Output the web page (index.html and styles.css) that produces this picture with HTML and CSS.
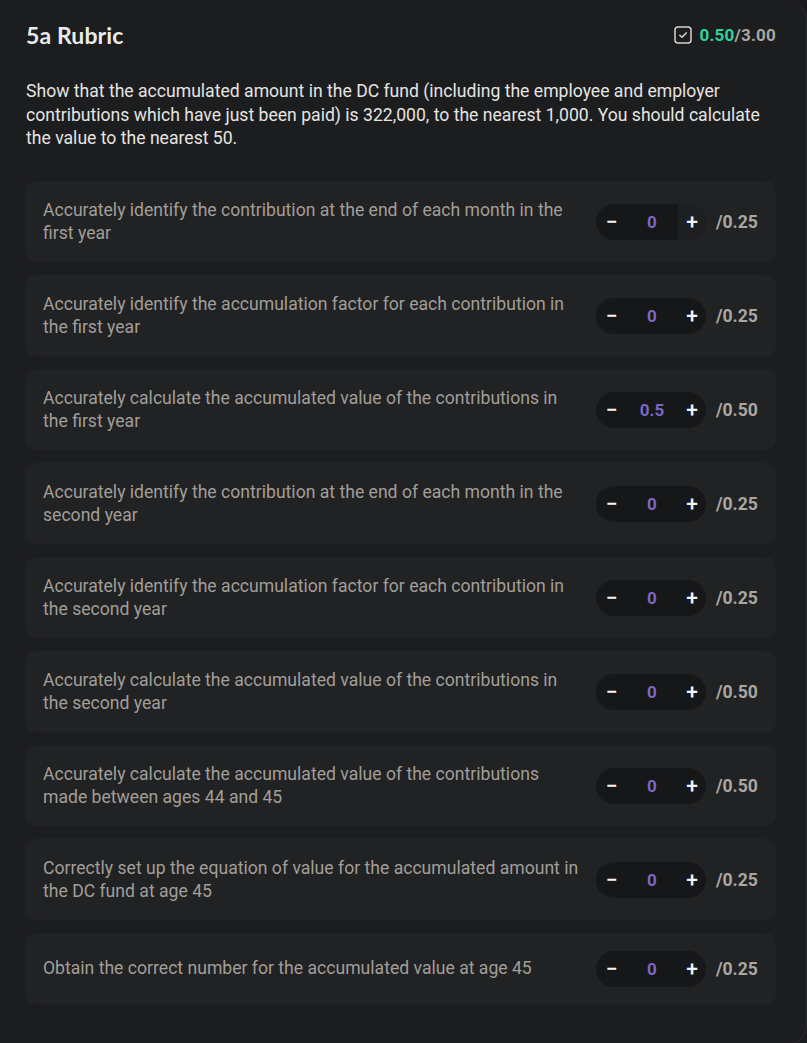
FILE: index.html
```html
<!DOCTYPE html>
<html lang="en">
<head>
<meta charset="utf-8">
<title>5a Rubric</title>
<link rel="stylesheet" href="styles.css">
</head>
<body>
<div class="card">
  <header class="head">
    <h1 class="title">5a Rubric</h1>
    <div class="total">
      <svg class="check" width="18" height="18" viewBox="0 0 18 18" aria-hidden="true">
        <rect x="1" y="1" width="16" height="16" rx="3" fill="none" stroke="#d6d3d1" stroke-width="1.5"/>
        <path d="M5.8 9.2 L8 11.2 L12.2 6.9" fill="none" stroke="#d6d3d1" stroke-width="1.5" stroke-linecap="round" stroke-linejoin="round"/>
      </svg>
      <span class="got">0.50</span><span class="max">/3.00</span>
    </div>
  </header>
  <p class="desc">Show that the accumulated amount in the DC fund (including the employee and employer contributions which have just been paid) is 322,000, to the nearest 1,000. You should calculate the value to the nearest 50.</p>
  <div class="items">
    <div class="item">
      <div class="text">Accurately identify the contribution at the end of each month in the first year</div>
      <div class="ctrl"><div class="pill"><button class="btn">−</button><span class="val">0</span><button class="btn hover">+</button></div><span class="out">/0.25</span></div>
    </div>
    <div class="item">
      <div class="text">Accurately identify the accumulation factor for each contribution in the first year</div>
      <div class="ctrl"><div class="pill"><button class="btn">−</button><span class="val">0</span><button class="btn">+</button></div><span class="out">/0.25</span></div>
    </div>
    <div class="item">
      <div class="text">Accurately calculate the accumulated value of the contributions in the first year</div>
      <div class="ctrl"><div class="pill"><button class="btn">−</button><span class="val">0.5</span><button class="btn">+</button></div><span class="out">/0.50</span></div>
    </div>
    <div class="item">
      <div class="text">Accurately identify the contribution at the end of each month in the second year</div>
      <div class="ctrl"><div class="pill"><button class="btn">−</button><span class="val">0</span><button class="btn">+</button></div><span class="out">/0.25</span></div>
    </div>
    <div class="item">
      <div class="text">Accurately identify the accumulation factor for each contribution in the second year</div>
      <div class="ctrl"><div class="pill"><button class="btn">−</button><span class="val">0</span><button class="btn">+</button></div><span class="out">/0.25</span></div>
    </div>
    <div class="item">
      <div class="text">Accurately calculate the accumulated value of the contributions in the second year</div>
      <div class="ctrl"><div class="pill"><button class="btn">−</button><span class="val">0</span><button class="btn">+</button></div><span class="out">/0.50</span></div>
    </div>
    <div class="item">
      <div class="text">Accurately calculate the accumulated value of the contributions made between ages 44 and 45</div>
      <div class="ctrl"><div class="pill"><button class="btn">−</button><span class="val">0</span><button class="btn">+</button></div><span class="out">/0.50</span></div>
    </div>
    <div class="item">
      <div class="text">Correctly set up the equation of value for the accumulated amount in the DC fund at age 45</div>
      <div class="ctrl"><div class="pill"><button class="btn">−</button><span class="val">0</span><button class="btn">+</button></div><span class="out">/0.25</span></div>
    </div>
    <div class="item">
      <div class="text">Obtain the correct number for the accumulated value at age 45</div>
      <div class="ctrl"><div class="pill"><button class="btn">−</button><span class="val">0</span><button class="btn">+</button></div><span class="out">/0.25</span></div>
    </div>
  </div>
</div>
</body>
</html>
```
FILE: styles.css
```css
* { box-sizing: border-box; }
html, body {
  margin: 0;
  padding: 0;
  background: #1a1b1d;
  height: 100%;
}
body {
  font-family: Roboto, "Liberation Sans", sans-serif;
  overflow: hidden;
}
.card {
  width: 807px;
  min-height: 1043px;
  background: #1c1d1f;
  border-right: 1px solid #2b2c2f;
  border-bottom: 1px solid #2b2c2f;
  border-radius: 0 20px 20px 0;
  padding: 20px 30px 40px 25px;
}
.head {
  display: flex;
  align-items: center;
  justify-content: space-between;
  height: 30px;
}
.title {
  margin: 0 0 0 1px;
  font-family: Lato, "Noto Sans", sans-serif;
  font-weight: 700;
  font-size: 23px;
  line-height: 30px;
  color: #ebebeb;
  letter-spacing: 0.1px;
}
.total {
  display: flex;
  align-items: center;
  font-weight: 700;
  font-size: 17px;
  letter-spacing: 0.2px;
}
.check { margin-right: 8px; }
.got { color: #2fd39e; }
.max { color: #aaa6a0; }
.desc {
  margin: 30px 0 0 1px;
  font-size: 17.6px;
  line-height: 23.5px;
  color: #e6e4e1;
}
.items {
  margin-top: 30px;
  display: flex;
  flex-direction: column;
  gap: 13px;
}
.item {
  display: flex;
  align-items: center;
  gap: 16px;
  background: #212224;
  border-radius: 10px;
  padding: 18px 18px 17px;
}
.text {
  flex: 1;
  font-size: 17.6px;
  line-height: 23px;
  color: #a29e98;
}
.ctrl {
  display: flex;
  align-items: center;
  gap: 10px;
}
.pill {
  display: flex;
  align-items: center;
  width: 110px;
  height: 36px;
  background: #161718;
  border-radius: 18px;
  overflow: hidden;
}
.btn {
  width: 28px;
  height: 36px;
  border: 0;
  padding: 0;
  background: transparent;
  color: #f2f2f2;
  font-family: Roboto, "Liberation Sans", sans-serif;
  font-size: 21px;
  font-weight: 500;
  line-height: 36px;
  text-align: center;
}
.btn:first-child { width: 30px; padding-left: 2px; }
.btn.hover { background: #1e1f21; }
.val {
  flex: 1;
  text-align: center;
  color: #7b68c6;
  font-weight: 700;
  font-size: 17px;
}
.out {
  width: 42px;
  color: #aaa6a0;
  font-weight: 700;
  font-size: 17.6px;
}
```
